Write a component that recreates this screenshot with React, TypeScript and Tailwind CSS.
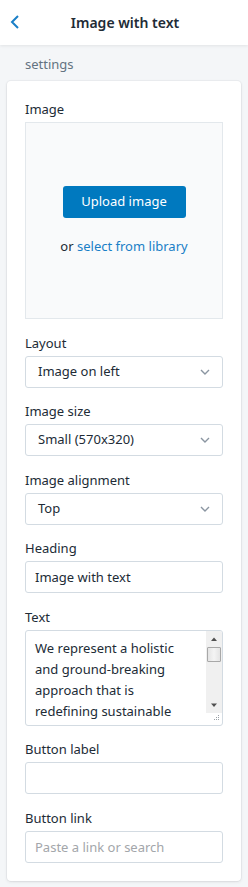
import React from "react";

const Chevron = () => (
  <svg width="12" height="12" viewBox="0 0 12 12" className="shrink-0">
    <path d="M2 4l4 4 4-4" fill="none" stroke="#8a95a1" strokeWidth="1.4" />
  </svg>
);

function Label({ children }: { children: React.ReactNode }) {
  return <div className="text-[13px] leading-[18px] text-[#212b36] mb-[4px]">{children}</div>;
}

function Select({ value }: { value: string }) {
  return (
    <div className="h-[32px] border border-[#d3dbe2] rounded-[3px] bg-white flex items-center justify-between pl-[12px] pr-[11px] text-[13px] text-[#212b36]">
      <span>{value}</span>
      <Chevron />
    </div>
  );
}

export default function App() {
  return (
    <div
      className="w-[248px] min-h-[887px] bg-[#f4f6f8]"
      style={{ fontFamily: '"Noto Sans", "Open Sans", sans-serif' }}
    >
      <div className="h-[45px] bg-white shadow-[0_1px_3px_rgba(0,0,0,0.08)] relative flex items-center justify-center">
        <svg width="12" height="16" viewBox="0 0 12 16" className="absolute left-[9px] top-[14px]">
          <path d="M9 2L3 8l6 6" fill="none" stroke="#1a7fc7" strokeWidth="2" />
        </svg>
        <span className="text-[14px] font-semibold text-[#212b36] ml-[2px]">Image with text</span>
      </div>
      <div className="pl-[25px] pt-[10px] pb-[8px] text-[13px] leading-[18px] text-[#637381]">settings</div>
      <div className="mx-[7px] bg-white rounded-[4px] shadow-[0_0_0_1px_rgba(63,63,68,0.04),0_1px_3px_rgba(63,63,68,0.12)] px-[18px] pt-[19px] pb-[18px] flex flex-col gap-[14.5px]">
        <div>
          <Label>Image</Label>
          <div className="h-[197px] border border-[#e3e8ec] bg-[#f9fafb] flex flex-col items-center pt-[63px]">
            <div className="w-[123px] h-[32px] bg-[#0079bf] rounded-[3px] text-white text-[13px] flex items-center justify-center">
              Upload image
            </div>
            <div className="mt-[19px] text-[13px] text-[#212b36]">
              or <span className="text-[#1a7fc7]">select from library</span>
            </div>
          </div>
        </div>
        <div>
          <Label>Layout</Label>
          <Select value="Image on left" />
        </div>
        <div>
          <Label>Image size</Label>
          <Select value="Small (570x320)" />
        </div>
        <div>
          <Label>Image alignment</Label>
          <Select value="Top" />
        </div>
        <div>
          <Label>Heading</Label>
          <input
            readOnly
            value="Image with text"
            className="w-full h-[32px] border border-[#d3dbe2] rounded-[3px] px-[9px] text-[13px] text-[#212b36] outline-none"
          />
        </div>
        <div>
          <Label>Text</Label>
          <div className="h-[96px] border border-[#d3dbe2] rounded-[3px] flex overflow-hidden relative">
            <div className="flex-1 pl-[9px] pr-[8px] pt-[7px] text-[13px] leading-[21px] text-[#212b36] overflow-hidden">
              We represent a holistic and ground-breaking approach that is redefining sustainable luxury.
            </div>
            <div className="w-[16px] flex flex-col">
              <div className="h-[82px] bg-[#f0f0f0] flex flex-col items-center">
                <svg width="16" height="16" viewBox="0 0 16 16">
                  <path d="M5 10h6L8 6.5z" fill="#505050" />
                </svg>
                <div className="w-[14px] h-[15px] bg-gradient-to-r from-[#e4e4e4] via-[#f4f4f4] to-[#e4e4e4] border border-[#a8a8a8] rounded-[1px]" />
                <div className="flex-1" />
                <svg width="16" height="16" viewBox="0 0 16 16">
                  <path d="M5 6.5h6L8 10z" fill="#505050" />
                </svg>
              </div>
              <div className="flex-1 relative">
                <svg width="12" height="12" viewBox="0 0 12 12" className="absolute right-[1px] bottom-[1px]">
                  <g fill="#9aa0a6">
                    <rect x="9" y="3" width="1" height="1" />
                    <rect x="7" y="5" width="1" height="1" />
                    <rect x="9" y="5" width="1" height="1" />
                    <rect x="5" y="7" width="1" height="1" />
                    <rect x="7" y="7" width="1" height="1" />
                    <rect x="9" y="7" width="1" height="1" />
                  </g>
                </svg>
              </div>
            </div>
          </div>
        </div>
        <div>
          <Label>Button label</Label>
          <input
            readOnly
            className="w-full h-[32px] border border-[#d3dbe2] rounded-[3px] px-[9px] text-[13px] text-[#212b36] outline-none"
          />
        </div>
        <div>
          <Label>Button link</Label>
          <input
            readOnly
            placeholder="Paste a link or search"
            className="w-full h-[32px] border border-[#d3dbe2] rounded-[3px] px-[9px] text-[13px] text-[#212b36] outline-none placeholder:text-[#a3a6aa]"
          />
        </div>
      </div>
    </div>
  );
}
